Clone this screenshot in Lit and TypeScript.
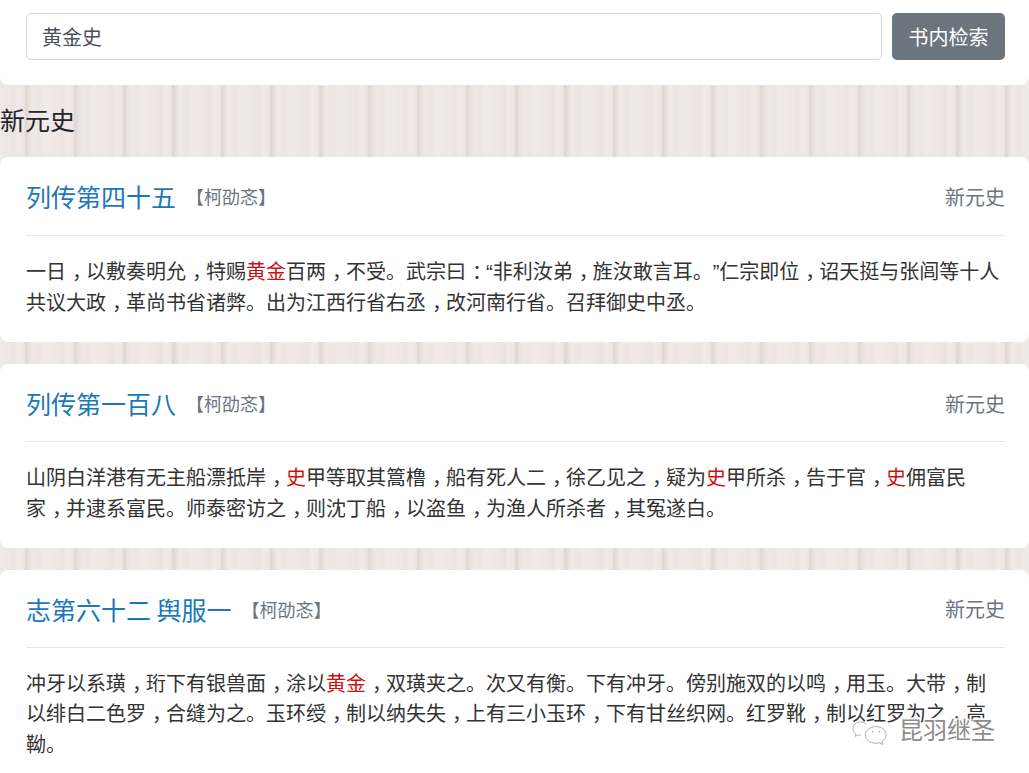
import { LitElement, html, css, TemplateResult } from "lit";
import { customElement } from "lit/decorators.js";

interface Result { title: string; body: string; }

const RESULTS: Result[] = [
  { title: "列传第四十五", body: "一日，以敷奏明允，特赐[黄金]百两，不受。武宗曰：“非利汝弟，旌汝敢言耳。”仁宗即位，诏天挺与张闾等十人共议大政，革尚书省诸弊。出为江西行省右丞，改河南行省。召拜御史中丞。" },
  { title: "列传第一百八", body: "山阴白洋港有无主船漂抵岸，[史]甲等取其篙橹，船有死人二，徐乙见之，疑为[史]甲所杀，告于官，[史]佣富民家，并逮系富民。师泰密访之，则沈丁船，以盗鱼，为渔人所杀者，其冤遂白。" },
  { title: "志第六十二 舆服一", body: "冲牙以系璜，珩下有银兽面，涂以[黄金]，双璜夹之。次又有衡。下有冲牙。傍别施双的以鸣，用玉。大带，制以绯白二色罗，合缝为之。玉环绶，制以纳失失，上有三小玉环，下有甘丝织网。红罗靴，制以红罗为之，高靿。" },
];

function renderBody(text: string): (TemplateResult | string)[] {
  const out: (TemplateResult | string)[] = [];
  for (const part of text.split(/(\[[^\]]+\]|，|：|“|”)/)) {
    if (!part) continue;
    if (part === "，" || part === "：") out.push(html`<span class="comma">${part}</span>`);
    else if (part === "“" || part === "”") out.push(html`<span class="quote">${part}</span>`);
    else if (part.startsWith("[")) out.push(html`<em class="hit">${part.slice(1, -1)}</em>`);
    else out.push(part);
  }
  return out;
}

@customElement("app-root")
export class AppRoot extends LitElement {
  static styles = css`
    :host {
      display: block;
      position: relative;
      height: 100vh;
      overflow: hidden;
      font-family: "Noto Sans CJK SC", "Liberation Sans", sans-serif;
      text-spacing-trim: space-all;
      color: #212529;
      background-color: #efe7e6;
      background-image: repeating-linear-gradient(90deg,
        #f1e9e8 0, #efe7e6 8px, #ebe2e1 14px, #f2eaea 18px, #eee5e4 24px,
        #dfd6d4 26px, #e9e0de 29px, #f1e9e8 33px, #eee6e5 40px, #f1eaea 44px, #f1e9e8 49px);
    }
    .search {
      display: flex;
      gap: 10px;
      height: 47px;
      padding: 13px 24px 25px 26px;
      background: #fff;
      border-radius: 0 0 8px 8px;
    }
    .input {
      flex: 1;
      box-sizing: border-box;
      border: 1px solid #ced4da;
      border-radius: 5px;
      padding: 0 15px;
      line-height: 45px;
      font-size: 20px;
      color: #495057;
    }
    .btn {
      width: 113px;
      border-radius: 5px;
      background: #6c757d;
      color: #fff;
      font-size: 20px;
      line-height: 47px;
      text-align: center;
    }
    h2 {
      margin: 0;
      height: 68.2px;
      padding-bottom: 4px;
      font-size: 25px;
      font-weight: 400;
      line-height: 68px;
      color: #212529;
    }
    .card {
      background: #fff;
      border-radius: 8px;
      padding: 0 24px 24.5px 26px;
      margin-bottom: 22px;
    }
    .head {
      display: flex;
      align-items: center;
      box-sizing: border-box;
      height: 78.6px;
      padding-top: 1px;
      border-bottom: 1px solid #e6e6e6;
      margin-bottom: 20px;
    }
    .title {
      font-size: 25px;
      color: #1b78bb;
    }
    .author {
      font-size: 18px;
      color: #6c757d;
      margin-left: 10px;
      flex: 1;
    }
    .source {
      font-size: 20px;
      color: #6c757d;
    }
    p {
      margin: 0;
      font-size: 20px;
      line-height: 30.3px;
      color: #333;
    }
    .hit {
      font-style: normal;
      color: #c8120f;
    }
    .comma {
      padding-left: 0.3em;
      margin-right: -0.3em;
    }
    .quote {
      font-family: "Liberation Sans", sans-serif;
    }
    .mark {
      position: absolute;
      left: 849px;
      top: 716px;
      display: flex;
      align-items: flex-start;
      gap: 8px;
      pointer-events: none;
    }
    .mark svg {
      display: block;
      margin-top: 5px;
    }
    .mark span {
      font-size: 24px;
      line-height: 26px;
      color: #8d8d8d;
      text-shadow: 1px 1px 0 #fff, -1px -1px 0 #fff, 1px -1px 0 #fff, -1px 1px 0 #fff, 0 -2px 1px #fff;
    }
  `;

  render() {
    return html`
      <div class="search" lang="zh-CN">
        <div class="input">黄金史</div>
        <div class="btn">书内检索</div>
      </div>
      <h2 lang="zh-CN">新元史</h2>
      ${RESULTS.map(
        (r) => html`
          <section class="card" lang="zh-CN">
            <div class="head">
              <span class="title">${r.title}</span>
              <span class="author">【柯劭忞】</span>
              <span class="source">新元史</span>
            </div>
            <p>${renderBody(r.body)}</p>
          </section>
        `
      )}
      <div class="mark" lang="zh-CN">
        <svg width="42" height="24" viewBox="0 0 42 28" fill="#fff" stroke="#9a9a9a" stroke-width="0.9">
          <path d="M17 3.5C15 2 12.5 1 10 1 5 1 1 4.5 1 8.8c0 2.6 1.4 4.7 3.6 6.2l-.8 3 3.4-1.8c1 .3 2 .5 3 .5" fill="none"/>
          <path d="M28 6.5c-7 0-12.5 4.4-12.5 9.8S21 26 28 26c1.5 0 2.8-.2 4-.6l3.8 2-.9-3.4c3-1.8 4.9-4.6 4.9-7.7 0-5.4-5-9.8-11.8-9.8z"/>
          <circle cx="24" cy="12.5" r="0.9" fill="#9a9a9a" stroke="none"/>
          <circle cx="32" cy="12.5" r="0.9" fill="#9a9a9a" stroke="none"/>
        </svg>
        <span>昆羽继圣</span>
      </div>
    `;
  }
}
